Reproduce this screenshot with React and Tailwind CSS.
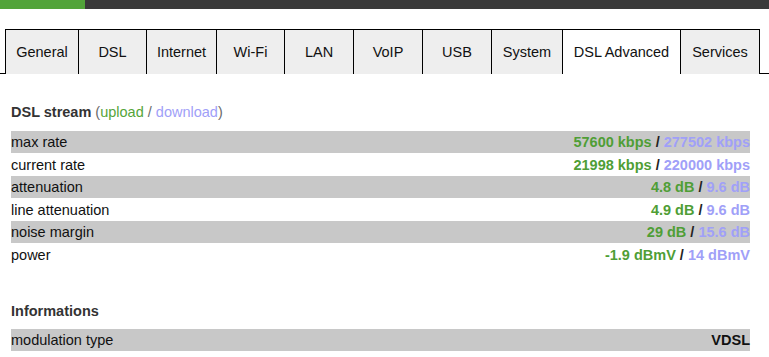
import React from "react";

const tabs = [
  { name: "General", w: "w-[73px]" },
  { name: "DSL", w: "w-[68px]" },
  { name: "Internet", w: "w-[70px]" },
  { name: "Wi-Fi", w: "w-[68px]" },
  { name: "LAN", w: "w-[69px]" },
  { name: "VoIP", w: "w-[69px]" },
  { name: "USB", w: "w-[69px]" },
  { name: "System", w: "w-[71px]" },
  { name: "DSL Advanced", w: "w-[118px]", active: true },
  { name: "Services", w: "w-[80px]", last: true },
];

const stream = [
  { label: "max rate", up: "57600 kbps", down: "277502 kbps" },
  { label: "current rate", up: "21998 kbps", down: "220000 kbps" },
  { label: "attenuation", up: "4.8 dB", down: "9.6 dB" },
  { label: "line attenuation", up: "4.9 dB", down: "9.6 dB" },
  { label: "noise margin", up: "29 dB", down: "15.6 dB" },
  { label: "power", up: "-1.9 dBmV", down: "14 dBmV" },
];

const Row = ({ index, label, children }) => (
  <div
    className={`flex items-center justify-between pt-[2px] ${
      index % 2 === 0 ? "h-[22px] bg-[#c8c8c8]" : "h-[23px] bg-white"
    }`}
  >
    <span className="text-[14.5px] text-[#111]">{label}</span>
    <span className="text-[14.5px] font-bold">{children}</span>
  </div>
);

export default function App() {
  return (
    <div className="min-h-screen bg-white font-['Liberation_Sans',Arial,sans-serif]">
      <div className="flex h-[9px]">
        <div className="w-[85px] bg-[#52a43a]"></div>
        <div className="flex-1 bg-[#3a3a3a]"></div>
      </div>

      <div className="mt-[20px] flex h-[45px]">
        <div className="w-[5px] border-b border-black"></div>
        {tabs.map((tab) => (
          <div
            key={tab.name}
            className={`${tab.w} flex items-center justify-center pt-[2px] border-t border-l border-black text-[14.5px] text-[#111] ${
              tab.last ? "border-r" : ""
            } ${tab.active ? "bg-white" : "bg-[#eeeeee]"}`}
          >
            {tab.name}
          </div>
        ))}
        <div className="flex-1 border-b border-black"></div>
      </div>

      <div className="w-[739px] pl-[11px] box-content pt-[28px]">
        <div className="mb-[9px] h-[20px] leading-[20px] text-[14.5px]">
          <span className="font-bold text-[#333]">DSL stream</span>{" "}
          <span className="text-[#6b6b6b]">(</span>
          <span className="text-[#55a53a]">upload</span>
          <span className="text-[#6b6b6b]"> / </span>
          <span className="text-[#a0a0f8]">download</span>
          <span className="text-[#6b6b6b]">)</span>
        </div>

        {stream.map((r, i) => (
          <Row key={r.label} index={i} label={r.label}>
            <span className="text-[#4f9e36]">{r.up}</span>
            <span className="text-[#222]"> / </span>
            <span className="text-[#a0a0f8]">{r.down}</span>
          </Row>
        ))}

        <div className="mt-[35px] mb-[8px] h-[20px] leading-[20px] text-[14.5px] font-bold text-[#333]">
          Informations
        </div>
        <Row index={0} label="modulation type">
          <span className="text-[#111]">VDSL</span>
        </Row>
      </div>
    </div>
  );
}
